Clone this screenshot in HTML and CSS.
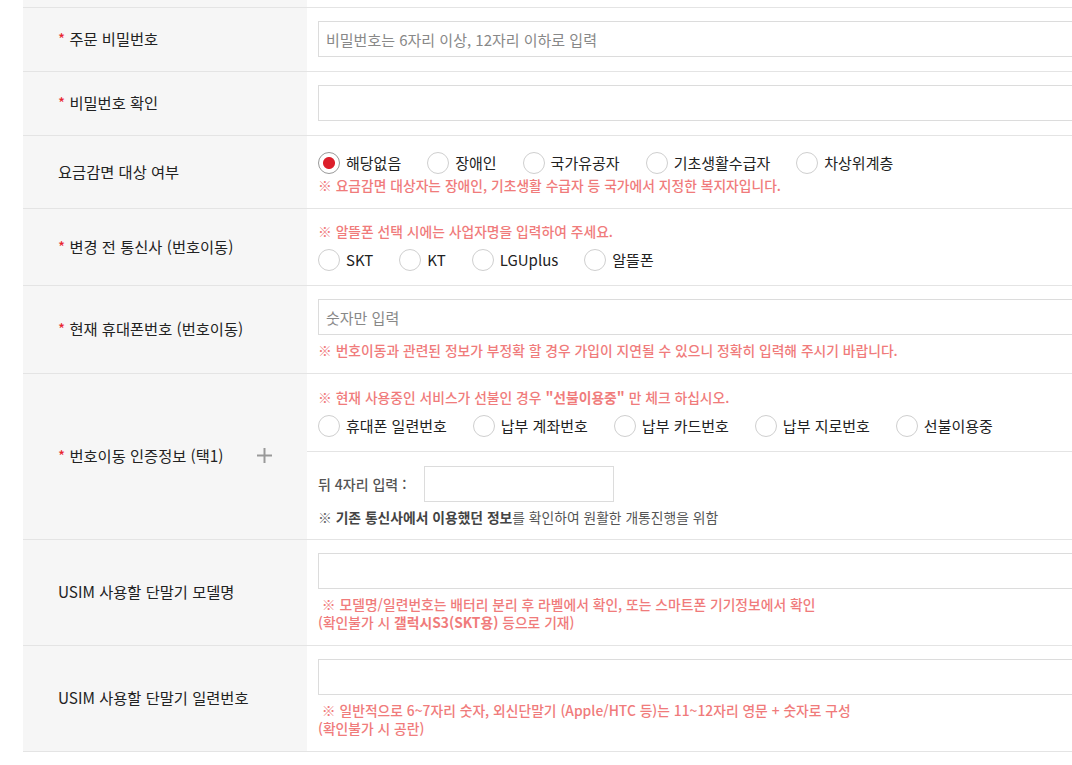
FILE: index.html
```html
<!DOCTYPE html>
<html lang="ko">
<head>
  <meta charset="UTF-8" />
  <meta name="viewport" content="width=device-width, initial-scale=1.0"/>
  <title>주문서 작성</title>
  <link rel="stylesheet" href="styles.css">
</head>
<body>

  <div class="order-form">

    <div class="row row-prev">
      <div class="th"></div>
      <div class="td"></div>
    </div>

    <div class="row">
      <div class="th"><span><span class="req">*</span> 주문 비밀번호</span></div>
      <div class="td">
        <input type="password" class="text-input" placeholder="비밀번호는 6자리 이상, 12자리 이하로 입력">
      </div>
    </div>

    <div class="row">
      <div class="th"><span><span class="req">*</span> 비밀번호 확인</span></div>
      <div class="td">
        <input type="password" class="text-input">
      </div>
    </div>

    <div class="row">
      <div class="th"><span>요금감면 대상 여부</span></div>
      <div class="td">
        <div class="radios radios-top">
          <label class="radio"><input type="radio" name="discount" checked><span>해당없음</span></label>
          <label class="radio"><input type="radio" name="discount"><span>장애인</span></label>
          <label class="radio"><input type="radio" name="discount"><span>국가유공자</span></label>
          <label class="radio"><input type="radio" name="discount"><span>기초생활수급자</span></label>
          <label class="radio"><input type="radio" name="discount"><span>차상위계층</span></label>
        </div>
        <p class="note note-tight">※ 요금감면 대상자는 장애인, 기초생활 수급자 등 국가에서 지정한 복지자입니다.</p>
      </div>
    </div>

    <div class="row">
      <div class="th"><span><span class="req">*</span> 변경 전 통신사 (번호이동)</span></div>
      <div class="td">
        <p class="note note-first">※ 알뜰폰 선택 시에는 사업자명을 입력하여 주세요.</p>
        <div class="radios">
          <label class="radio"><input type="radio" name="carrier"><span>SKT</span></label>
          <label class="radio"><input type="radio" name="carrier"><span>KT</span></label>
          <label class="radio"><input type="radio" name="carrier"><span>LGUplus</span></label>
          <label class="radio"><input type="radio" name="carrier"><span>알뜰폰</span></label>
        </div>
      </div>
    </div>

    <div class="row">
      <div class="th"><span><span class="req">*</span> 현재 휴대폰번호 (번호이동)</span></div>
      <div class="td">
        <input type="text" class="text-input" placeholder="숫자만 입력">
        <p class="note">※ 번호이동과 관련된 정보가 부정확 할 경우 가입이 지연될 수 있으니 정확히 입력해 주시기 바랍니다.</p>
      </div>
    </div>

    <div class="row">
      <div class="th th-split">
        <span><span class="req">*</span> 번호이동 인증정보 (택1)</span>
        <svg class="plus" width="17" height="17" viewBox="0 0 17 17">
          <path d="M8.5 1v15M1 8.5h15" stroke="#999" stroke-width="2" fill="none"/>
        </svg>
      </div>
      <div class="td td-sub">
        <div class="sub sub-radios">
          <p class="note note-first">※ 현재 사용중인 서비스가 선불인 경우 <b>"선불이용중"</b> 만 체크 하십시오.</p>
          <div class="radios">
            <label class="radio"><input type="radio" name="auth"><span>휴대폰 일련번호</span></label>
            <label class="radio"><input type="radio" name="auth"><span>납부 계좌번호</span></label>
            <label class="radio"><input type="radio" name="auth"><span>납부 카드번호</span></label>
            <label class="radio"><input type="radio" name="auth"><span>납부 지로번호</span></label>
            <label class="radio"><input type="radio" name="auth"><span>선불이용중</span></label>
          </div>
        </div>
        <div class="sub sub-digits">
          <div class="digits">
            <span class="digits-label">뒤 4자리 입력 :</span>
            <input type="text" class="text-input short-input">
          </div>
          <p class="note note-gray"><span class="mark">※</span> <b>기존 통신사에서 이용했던 정보</b>를 확인하여 원활한 개통진행을 위함</p>
        </div>
      </div>
    </div>

    <div class="row">
      <div class="th"><span>USIM 사용할 단말기 모델명</span></div>
      <div class="td">
        <input type="text" class="text-input">
        <p class="note">&nbsp;※ 모델명/일련번호는 배터리 분리 후 라벨에서 확인, 또는 스마트폰 기기정보에서 확인<br>(확인불가 시 <b>갤럭시S3(SKT용)</b> 등으로 기재)</p>
      </div>
    </div>

    <div class="row">
      <div class="th"><span>USIM 사용할 단말기 일련번호</span></div>
      <div class="td">
        <input type="text" class="text-input">
        <p class="note">&nbsp;※ 일반적으로 6~7자리 숫자, 외신단말기 (Apple/HTC 등)는 11~12자리 영문 + 숫자로 구성<br>(확인불가 시 공란)</p>
      </div>
    </div>

  </div>

</body>
</html>
```

FILE: styles.css
```css
html, body {
  overflow-x: hidden;
}

body {
  margin: 0;
  background: #fff;
  color: #222;
  font-family: 'Noto Sans CJK KR', 'Noto Sans', sans-serif;
}

.order-form {
  width: 1100px;
  margin-left: 23px;
}

.row {
  display: flex;
  border-bottom: 1px solid #e4e4e4;
}

.row-prev {
  height: 7px;
}

.th {
  width: 284px;
  flex-shrink: 0;
  box-sizing: border-box;
  padding: 0 34px 3px 35px;
  background: #f6f6f6;
  display: flex;
  align-items: center;
  font-size: 15.3px;
  line-height: 20px;
  color: #222;
}

.row-prev .th {
  padding: 0;
}

.th-split {
  justify-content: space-between;
}

.req {
  color: #e8242c;
}

.plus {
  display: block;
}

.td {
  flex: 1;
  padding: 13px 11px 14px;
}

.row-prev .td {
  padding: 0;
}

.td-sub {
  padding: 0;
}

.sub {
  padding: 14px 11px 14px;
}

.sub-radios {
  border-bottom: 1px solid #e4e4e4;
}

.sub-digits {
  padding-bottom: 13px;
}

.text-input {
  display: block;
  box-sizing: border-box;
  width: 100%;
  height: 36px;
  margin: 0;
  padding: 0 7px;
  border: 1px solid #dcdcdc;
  background: #fff;
  font-family: inherit;
  font-size: 15px;
  color: #333;
  outline: none;
}

.text-input::placeholder {
  color: #888;
}

.short-input {
  width: 190px;
}

.digits {
  display: flex;
  align-items: center;
}

.digits-label {
  font-size: 14px;
  font-weight: 500;
  color: #555;
  margin-right: 18px;
}

.radios {
  display: flex;
  align-items: center;
  margin-top: 9px;
}

.radios-top {
  margin-top: 3px;
}

.radio {
  display: flex;
  align-items: center;
  margin-right: 26px;
  font-size: 15px;
  line-height: 22px;
  color: #222;
  cursor: pointer;
}

.radio input {
  appearance: none;
  -webkit-appearance: none;
  width: 22px;
  height: 22px;
  margin: 0 6px 0 0;
  border: 1px solid #cfcfcf;
  border-radius: 50%;
  background: #fff;
}

.radio input:checked {
  border-color: #9a9a9a;
  background: radial-gradient(circle, #dc1f2b 5.5px, #fff 6.5px);
}

.note {
  margin: 6px 0 0;
  font-size: 13.8px;
  line-height: 18px;
  font-weight: 500;
  color: #f07b7b;
}

.note b {
  font-weight: 700;
}

.note-tight {
  margin-top: 2px;
}

.note-first {
  margin-top: 0;
}

.note-gray {
  color: #555;
  font-weight: 400;
}

.note-gray .mark {
  color: #666;
}

.note-gray b {
  color: #444;
}
```
